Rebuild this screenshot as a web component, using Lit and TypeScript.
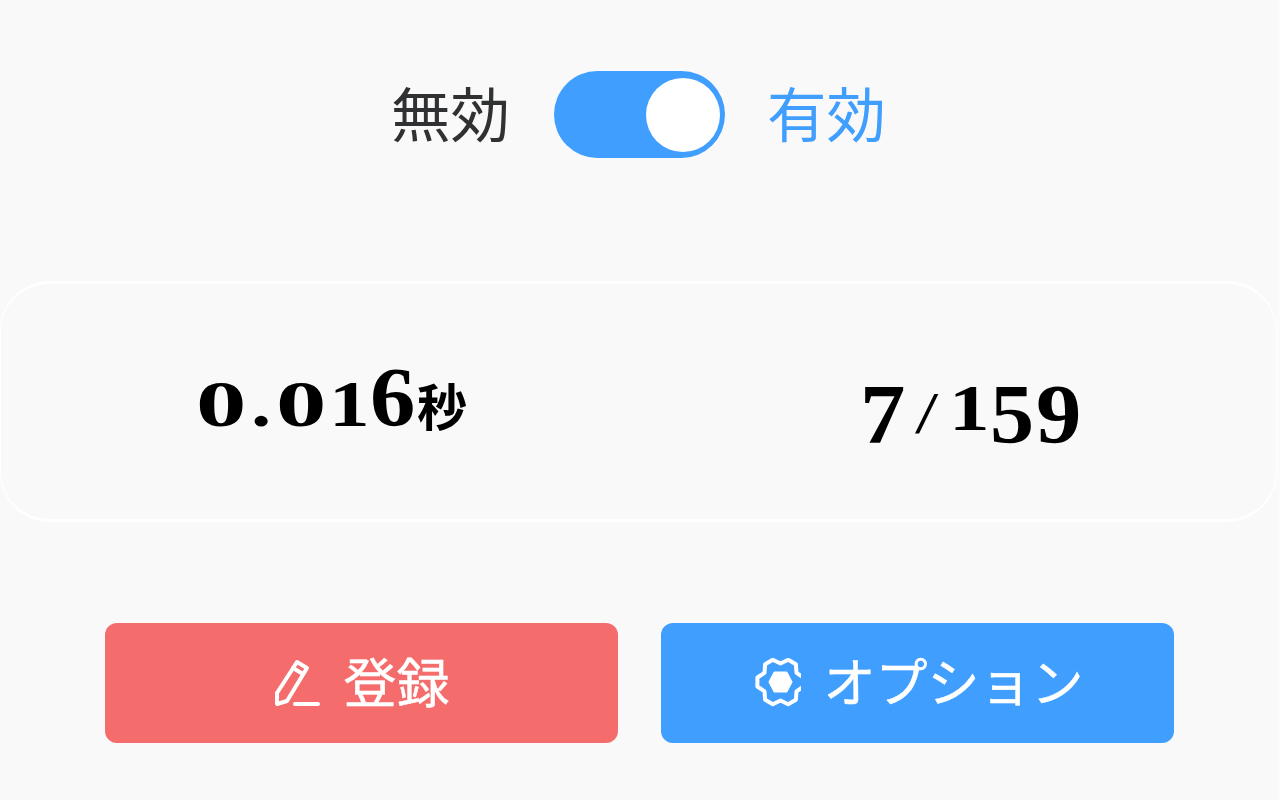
import { LitElement, html, css } from "lit";
import { customElement } from "lit/decorators.js";

type G = { c: string; w: number; sx: number; k: string };

const TIME: G[] = [
  { c: "0", w: 55, sx: 1.55, k: "s" },
  { c: ".", w: 25, sx: 1.25, k: "s" },
  { c: "0", w: 53, sx: 1.55, k: "s" },
  { c: "1", w: 41, sx: 1.25, k: "s" },
  { c: "6", w: 47, sx: 1.08, k: "t" },
];
const COUNT_A: G[] = [{ c: "7", w: 55, sx: 1.08, k: "t d" }];
const COUNT_B: G[] = [
  { c: "1", w: 41, sx: 1.25, k: "s" },
  { c: "5", w: 46, sx: 1.05, k: "t d" },
  { c: "9", w: 46, sx: 1.08, k: "t d" },
];

function gearPath(cx: number, cy: number, outer: number, inner: number): string {
  const pts: string[] = [];
  for (let i = 0; i < 6; i++) {
    const a = (i * 60 * Math.PI) / 180;
    const spread = (11 * Math.PI) / 180;
    const p = (r: number, t: number) => `${(cx + r * Math.cos(t)).toFixed(1)} ${(cy + r * Math.sin(t)).toFixed(1)}`;
    pts.push(`L${p(outer, a - spread)}`, `L${p(outer, a + spread)}`, `L${p(inner, a + (30 * Math.PI) / 180)}`);
  }
  return "M" + pts.join(" ").slice(1) + " Z";
}

@customElement("app-root")
export class AppRoot extends LitElement {
  static styles = css`
    :host { display: block; width: 1280px; height: 800px; background: #fbfbfb; overflow: hidden; font-family: "Noto Sans CJK JP", "Noto Sans CJK SC", sans-serif; }
    .frame { width: 1277px; height: 100%; background: #f9f9f9; }
    .page { display: flex; flex-direction: column; padding-top: 71px; height: 100%; box-sizing: border-box; filter: blur(0.6px); }
    .switch-row { display: flex; align-items: center; gap: 44px; height: 87px; padding-left: 391px; }
    .lbl { font-size: 59.5px; line-height: 80px; height: 87px; color: #303133; white-space: nowrap; }
    .lbl.on { color: #409eff; margin-left: -2px; }
    .switch { width: 171px; height: 87px; border-radius: 44px; background: #409eff; display: flex; align-items: center; justify-content: flex-end; padding: 0 5px; box-sizing: border-box; }
    .knob { width: 74px; height: 74px; border-radius: 50%; background: #fff; }
    .card { margin-top: 123px; width: 1277px; height: 241px; box-sizing: border-box; border-style: solid; border-color: #fff; border-width: 3px 1px; border-radius: 50px; display: grid; grid-template-columns: 1fr 1fr; }
    .stat { display: flex; align-items: baseline; color: #000; font-family: "Liberation Serif", serif; font-weight: 700; white-space: nowrap; line-height: 80px; height: 80px; }
    .time { padding-left: 195px; margin-top: 74px; }
    .count { padding-left: 221px; margin-top: 78px; }
    .g { display: inline-block; transform-origin: left bottom; }
    .s { font-size: 65px; }
    .t { font-size: 84px; }
    .unit { font-family: "Noto Sans CJK JP", sans-serif; font-size: 50px; font-weight: 700; }
    .sl { font-weight: 400; font-size: 60px; width: 34px; display: inline-block; transform-origin: left bottom; transform: translate(0, 3px) scaleX(1.4); }
    .buttons { margin-top: 101px; display: flex; gap: 43px; padding-left: 105px; }
    .btn { width: 513px; height: 120px; border-radius: 12px; display: flex; justify-content: center; align-items: center; gap: 22px; color: #fff; font-size: 52px; line-height: 114px; }
    .btn span { height: 120px; -webkit-text-stroke: 0.5px #fff; }
    .red { background: #f56c6c; font-size: 53px; gap: 24px; }
    .blue { background: #409eff; }
    svg { display: block; flex: none; }
  `;

  glyphs(list: G[]) {
    return list.map((g) => {
      const drop = g.k.includes("d") ? " translateY(13px)" : "";
      return html`<span class="g ${g.k}" style="width:${g.w}px;transform:${drop} scaleX(${g.sx})">${g.c}</span>`;
    });
  }

  render() {
    return html`<div class="frame"><div class="page">
      <div class="switch-row">
        <span class="lbl">無効</span>
        <div class="switch"><div class="knob"></div></div>
        <span class="lbl on">有効</span>
      </div>
      <div class="card">
        <div class="stat time">${this.glyphs(TIME)}<span class="unit">秒</span></div>
        <div class="stat count">${this.glyphs(COUNT_A)}<span class="sl">/</span>${this.glyphs(COUNT_B)}</div>
      </div>
      <div class="buttons">
        <div class="btn red">
          <svg width="46" height="48" viewBox="0 0 46 48" fill="none" stroke="#fff" stroke-width="4" stroke-linejoin="round" stroke-linecap="round">
            <path d="M23 3 L33 9 L13 42 L3 45 L3 34 Z"/><path d="M19 9 L29 15"/><path d="M21 45 H44"/>
          </svg>
          <span>登録</span>
        </div>
        <div class="btn blue">
          <svg width="50" height="50" viewBox="-4.5 1 50 50" fill="none" stroke="#fff" stroke-width="4" stroke-linejoin="round">
            <path d="${gearPath(25, 25, 23.5, 18.5)}"/>
            <path d="M19 15.5 H31 L36 25 L31 34.5 H19 L14 25 Z" fill="#fff" stroke-width="2"/>
          </svg>
          <span>オプション</span>
        </div>
      </div>
    </div></div>`;
  }
}
